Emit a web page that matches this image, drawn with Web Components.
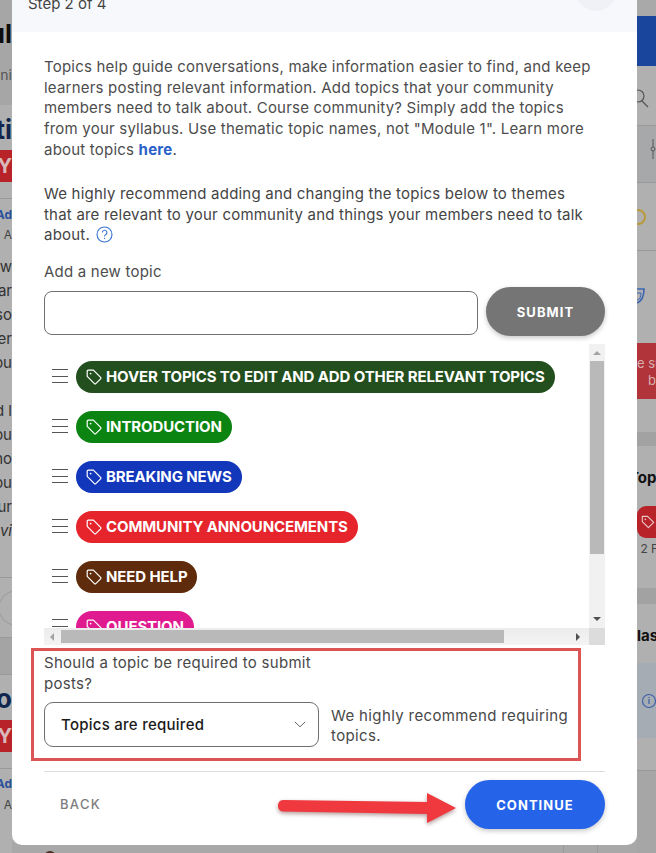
<!DOCTYPE html>
<html>
<head>
<meta charset="utf-8">
<title>Step 2 of 4</title>
<style>
  html, body { margin: 0; height: 853px; overflow: hidden; }
  body { font-family: Inter, "Liberation Sans", sans-serif; background: #a8a8a8; }
</style>
</head>
<body>
<page-shell>
  <side-strip slot="left" side="left"></side-strip>
  <wizard-modal slot="modal"></wizard-modal>
  <side-strip slot="right" side="right"></side-strip>
</page-shell>

<script>
// dimmed page behind the modal, only the slivers beside it show
const LEFT_ROWS = [
  [22, "", "#a6a6a6"],
  [24, "ul", "#a6a6a6", "font:700 26px Inter;color:#0d0d0d"],
  [20, "", "#a6a6a6"],
  [18, "ni", "#a6a6a6", "font:14px Inter;color:#555"],
  [21, "", "#a6a6a6"],
  [13, "", "#b0b0b0"],
  [24, "ti", "#b0b0b0", "font:700 26px Inter;color:#10264f"],
  [8, "", "#b0b0b0"],
  [32, "Y", "#b8232a", "font:700 20px Inter;color:#d9b9b9"],
  [16, "", "#b0b0b0"],
  [1, "", "#999"],
  [8, "", "#b0b0b0"],
  [16, "Ad", "#b0b0b0", "font:700 12px Inter;color:#2a4f9c"],
  [4, "", "#b0b0b0"],
  [16, "A", "#b0b0b0", "font:12px Inter;color:#444"],
  [12, "", "#b0b0b0"],
  [24, "w", "#b0b0b0", "font:15px Inter;color:#333"],
  [24, "ar", "#b0b0b0", "font:15px Inter;color:#333"],
  [24, "so", "#b0b0b0", "font:15px Inter;color:#333"],
  [24, "er", "#b0b0b0", "font:15px Inter;color:#333"],
  [24, "ou", "#b0b0b0", "font:15px Inter;color:#333"],
  [24, "", "#b0b0b0"],
  [24, "d l", "#b0b0b0", "font:15px Inter;color:#333"],
  [24, "ou", "#b0b0b0", "font:15px Inter;color:#333"],
  [24, "no", "#b0b0b0", "font:15px Inter;color:#333"],
  [24, "ou", "#b0b0b0", "font:15px Inter;color:#333"],
  [24, "ur", "#b0b0b0", "font:15px Inter;color:#333"],
  [24, "vi", "#b0b0b0", "font:italic 15px Inter;color:#333"],
  [34, "", "#b0b0b0"],
  [1, "", "#999"],
  [59, "", "#b0b0b0", "", "circle"],
  [1, "", "#999"],
  [36, "", "#a4a4a4"],
  [1, "", "#999"],
  [12, "", "#b0b0b0"],
  [24, "o", "#b0b0b0", "font:700 26px Inter;color:#10264f"],
  [9, "", "#b0b0b0"],
  [32, "Y", "#b8232a", "font:700 20px Inter;color:#d9b9b9"],
  [16, "", "#b0b0b0"],
  [1, "", "#999"],
  [7, "", "#b0b0b0"],
  [16, "Ad", "#b0b0b0", "font:700 12px Inter;color:#2a4f9c"],
  [5, "", "#b0b0b0"],
  [16, "A", "#b0b0b0", "font:12px Inter;color:#444"],
  [40, "", "#b0b0b0"]
];

const RIGHT_ROWS = [
  [16, "", "#a9a9a9"],
  [50, "", "#1a459c"],
  [59, "", "#b0b0b0", "", "search"],
  [1, "", "#999"],
  [56, "", "#a6a8aa", "", "slider"],
  [1, "", "#999"],
  [67, "", "#b0b0b0", "", "smile"],
  [1, "", "#999"],
  [92, "", "#b0b0b0", "", "shield"],
  [12, "", "#b0343a"],
  [17, "e su", "#b0343a", "font:13px Inter;color:#d8b0b0"],
  [17, "&nbsp;&nbsp;&nbsp;b", "#b0343a", "font:13px Inter;color:#d8b0b0"],
  [10, "", "#b0343a"],
  [33, "", "#b0b0b0"],
  [14, "", "#a2a2a2"],
  [22, "", "#b0b0b0"],
  [20, "Top", "#b0b0b0", "font:700 15px Inter;color:#111;text-indent:-8px"],
  [18, "", "#b0b0b0"],
  [32, "", "#b0b0b0", "", "tag"],
  [4, "", "#b0b0b0"],
  [14, "&nbsp;2 F", "#b0b0b0", "font:12px Inter;color:#444"],
  [32, "", "#b0b0b0"],
  [16, "", "#a2a2a2"],
  [22, "", "#b0b0b0"],
  [20, "las", "#b0b0b0", "font:700 15px Inter;color:#111"],
  [17, "", "#b0b0b0"],
  [75, "", "#a6acb4", "", "info"],
  [32, "", "#b0b0b0"],
  [1, "", "#999"],
  [84, "", "#a6a6a6"]
];

const STRIP_ICONS = {
  circle: `<svg width="12" height="59" style="display:block"><circle cx="16" cy="30" r="17" fill="none" stroke="#9a9a9a"/></svg>`,
  search: `<svg width="19" height="59" style="display:block"><circle cx="1" cy="30" r="6" fill="none" stroke="#555" stroke-width="1.2"/><path d="M5 35l6 6" stroke="#555" stroke-width="1.2"/></svg>`,
  slider: `<svg width="19" height="56" style="display:block"><path d="M16 13v20" stroke="#555"/><circle cx="16" cy="23" r="2" fill="#a6a8aa" stroke="#555"/></svg>`,
  smile: `<svg width="19" height="67" style="display:block"><circle cx="1" cy="34" r="7" fill="none" stroke="#b99a38" stroke-width="2"/></svg>`,
  shield: `<svg width="19" height="92" style="display:block"><path d="M-6 38h13c0 8-2 12-7 14" fill="none" stroke="#3a66b0" stroke-width="1.6"/><path d="M-2 42h6c0 4-1 6-4 7" fill="none" stroke="#3a66b0"/></svg>`,
  tag: `<div style="width:19px;height:32px;background:#b8232a;border-radius:9px 0 0 9px;display:flex;align-items:center;padding-left:4px;box-sizing:border-box"><svg width="14" height="14" viewBox="0 0 16 16"><path d="M1.5 1.5h6l7 7-6 6-7-7z" fill="none" stroke="#e8c8c8" stroke-width="1.3" stroke-linejoin="round"/><circle cx="5" cy="5" r=".9" fill="#e8c8c8"/></svg></div>`,
  info: `<svg width="19" height="75" style="display:block"><circle cx="12" cy="38" r="6.5" fill="none" stroke="#3a5ea8" stroke-width="1.1"/><path d="M12 36v5M12 34v1" stroke="#3a5ea8" stroke-width="1.2"/></svg>`
};

class SideStrip extends HTMLElement {
  connectedCallback() {
    const shadow = this.attachShadow({ mode: "open" });
    const left = this.getAttribute("side") === "left";
    const rows = left ? LEFT_ROWS : RIGHT_ROWS;
    const html = rows.map(([h, text, bg, css, icon]) => {
      const inner = icon ? STRIP_ICONS[icon] : text;
      // line-height goes after css, the font shorthand would reset it
      return `<div class="row" style="height:${h}px;background:${bg};${css || ""};line-height:${h}px">${inner}</div>`;
    }).join("");
    shadow.innerHTML = `
      <style>
        :host { display: block; overflow: hidden; height: 853px; }
        .row { overflow: hidden; white-space: nowrap; }
        .left .row { text-align: right; direction: rtl; }
      </style>
      <div class="${left ? "left" : "right"}">${html}</div>`;
  }
}

class PageShell extends HTMLElement {
  connectedCallback() {
    const shadow = this.attachShadow({ mode: "open" });
    shadow.innerHTML = `
      <style>
        :host { display: grid; grid-template-columns: 12px 625px 19px; height: 853px; position: relative; }
        svg { position: absolute; left: 0; top: 845px; }
      </style>
      <slot name="left"></slot>
      <slot name="modal"></slot>
      <slot name="right"></slot>
      <svg width="656" height="8"><path d="M563.5 0v8M597.5 0v8" stroke="#9a9a9a"/><circle cx="50" cy="12" r="6" fill="#4a2a20"/></svg>`;
  }
}

class TopicTag extends HTMLElement {
  connectedCallback() {
    const shadow = this.attachShadow({ mode: "open" });
    shadow.innerHTML = `
      <style>
        :host { display: flex; align-items: center; height: 32px; flex: none; }
        .burger { width: 16px; height: 12px; margin: 0 8px; flex: none;
          border-top: 1px solid #555; border-bottom: 1px solid #555; position: relative; top: -1px; box-sizing: content-box; }
        .burger::after { content: ""; display: block; height: 1px; background: #555; margin-top: 5.5px; }
        .pill { display: flex; align-items: center; height: 32px; padding: 0 10px; gap: 4px;
          border-radius: 16px; white-space: nowrap; color: #fff;
          font: 700 15px/32px Inter, "Liberation Sans", sans-serif; letter-spacing: -0.12px;
          background: ${this.getAttribute("color")}; }
        svg { flex: none; }
      </style>
      <span class="burger"></span>
      <span class="pill">
        <svg width="16" height="16" viewBox="0 0 16 16"><path d="M1.2 2.2a1 1 0 0 1 1-1h5.2l7.2 7.2a1 1 0 0 1 0 1.4l-4.8 4.8a1 1 0 0 1-1.4 0L1.2 7.4z" fill="none" stroke="#fff" stroke-width="1.2" stroke-linejoin="round"/><circle cx="4.6" cy="4.6" r=".9" fill="#fff"/></svg>
        <slot></slot>
      </span>`;
  }
}

class ScrollBox extends HTMLElement {
  connectedCallback() {
    const shadow = this.attachShadow({ mode: "open" });
    shadow.innerHTML = `
      <style>
        :host { display: grid; grid-template-columns: 545px 16px; grid-template-rows: 284px 17px; height: 301px; }
        .list { overflow: hidden; padding: 17px 0 0 0; box-sizing: border-box;
          display: flex; flex-direction: column; gap: 18px; }
        .vbar { background: #f1f1f1; display: flex; flex-direction: column; align-items: center; padding: 0 1px; }
        .hbar { background: linear-gradient(#ececec, #f4f4f4); display: flex; align-items: center; }
        .corner { background: #dcdcdc; }
        .up, .down { width: 0; height: 0; border: 4px solid transparent; flex: none; }
        .up { border-bottom: 4px solid #a3a3a3; border-top-width: 0; margin-top: 7px; margin-bottom: 6px; }
        .down { border-top: 4px solid #505050; border-bottom-width: 0; margin-top: 63px; }
        .vthumb { width: 14px; height: 193px; background: #b9b9b9; flex: none; }
        .left, .right { width: 0; height: 0; border: 4px solid transparent; flex: none; }
        .left { border-right: 4px solid #a3a3a3; border-left-width: 0; margin: 0 7px 0 6px; }
        .right { border-left: 4px solid #505050; border-right-width: 0; margin-left: 72px; }
        .hthumb { width: 443px; height: 13px; background: #b9b9b9; flex: none; }
      </style>
      <div class="list"><slot></slot></div>
      <div class="vbar"><span class="up"></span><span class="vthumb"></span><span class="down"></span></div>
      <div class="hbar"><span class="left"></span><span class="hthumb"></span><span class="right"></span></div>
      <div class="corner"></div>`;
  }
}

class PillButton extends HTMLElement {
  connectedCallback() {
    const shadow = this.attachShadow({ mode: "open" });
    shadow.innerHTML = `
      <style>
        :host { display: flex; align-items: center; justify-content: center; flex: none;
          height: 49px; border-radius: 25px; color: #fff; box-sizing: border-box;
          font: 700 13px Inter, "Liberation Sans", sans-serif; letter-spacing: 1.05px;
          box-shadow: 0 2px 5px rgba(0,0,0,.22); }
      </style>
      <slot></slot>`;
  }
}

class SelectBox extends HTMLElement {
  connectedCallback() {
    const shadow = this.attachShadow({ mode: "open" });
    shadow.innerHTML = `
      <style>
        :host { display: flex; align-items: center; justify-content: space-between; flex: none;
          width: 275px; height: 45px; box-sizing: border-box; padding: 0 12px 0 16px;
          border: 1px solid #6f6f6f; border-radius: 9px; color: #1a1a1a;
          font: 500 15px Inter, "Liberation Sans", sans-serif; letter-spacing: .26px; }
      </style>
      <slot></slot>
      <svg width="12" height="7" viewBox="0 0 12 7"><path d="M.8.8L6 5.8 11.2.8" fill="none" stroke="#666" stroke-width="1"/></svg>`;
  }
}

class WizardModal extends HTMLElement {
  connectedCallback() {
    const shadow = this.attachShadow({ mode: "open" });
    shadow.innerHTML = `
      <style>
        :host { display: flex; flex-direction: column; position: relative; height: 845px; background: #fff;
          border-radius: 0 0 10px 10px; overflow: hidden; color: #4d4d4d;
          font: 15px/20.7px Inter, "Liberation Sans", sans-serif; }
        header { height: 32px; flex: none; background: #f7f8fb; position: relative; overflow: hidden; color: #444; }
        header span { position: absolute; left: 16px; top: -6px; }
        header i { position: absolute; left: 563px; top: -31px; width: 42px; height: 42px; border-radius: 50%; background: #eff1f7; }
        main { padding: 25px 32px 0; display: flex; flex-direction: column; flex: 1; letter-spacing: .21px; }
        p { margin: 0; max-width: 550px; }
        p.b { margin-top: 23.5px; color: #444; }
        a { color: #2b62c9; font-weight: 700; text-decoration: none; }
        .help { vertical-align: -3px; margin-left: 2px; }
        label { display: block; margin-top: 15.5px; }
        .add { display: flex; gap: 8px; margin-top: 5px; align-items: flex-start; height: 49px; }
        .input { width: 434px; height: 44px; margin-top: 4px; box-sizing: border-box; border: 1px solid #707070; border-radius: 8px; }
        scroll-box { margin-top: 8px; }
        .mark { margin: 3px 24px 0 -13px; border: 3px solid #dc5555; height: 113px; box-sizing: border-box;
          padding: 2px 0 0 10px; }
        .mark .q { width: 300px; color: #484848; letter-spacing: .29px; }
        .row { display: flex; align-items: center; gap: 12px; margin-top: 7px; }
        .row p { color: #484848; width: 240px; letter-spacing: .37px; margin-top: 4px; }
        footer { margin-top: 10px; border-top: 1px solid #ddd; height: 58px; display: flex;
          align-items: center; justify-content: space-between; padding-left: 16px; padding-top: 8px; box-sizing: border-box; }
        .back { font: 500 13px Inter, "Liberation Sans", sans-serif; letter-spacing: 1.3px; color: #7d7d7d; margin-top: -2px; }
        .arrow { position: absolute; left: 264px; top: 786px; filter: drop-shadow(0 2px 2px rgba(90,30,30,.45)); }
      </style>
      <header><span>Step 2 of 4</span><i></i></header>
      <main>
        <p>Topics help guide conversations, make information easier to find, and keep learners posting relevant information. Add topics that your community members need to talk about. Course community? Simply add the topics from your syllabus. Use thematic topic names, not "Module 1". Learn more about topics <a>here</a>.</p>
        <p class="b">We highly recommend adding and changing the topics below to themes that are relevant to your community and things your members need to talk about.
          <svg class="help" width="17" height="17" viewBox="0 0 17 17"><circle cx="8.5" cy="8.5" r="7.5" fill="none" stroke="#3a74d0" stroke-width="1.1"/><path d="M6.3 6.6a2.3 2.3 0 1 1 3.4 2c-.8.5-1.2.9-1.2 1.9" fill="none" stroke="#3a74d0" stroke-width="1.1"/><circle cx="8.5" cy="12.4" r=".7" fill="#3a74d0"/></svg>
        </p>
        <label>Add a new topic</label>
        <div class="add">
          <div class="input"></div>
          <pill-button style="width:119px;background:#757575">SUBMIT</pill-button>
        </div>
        <scroll-box>
          <topic-tag color="#234f1e">HOVER TOPICS TO EDIT AND ADD OTHER RELEVANT TOPICS</topic-tag>
          <topic-tag color="#0b8412">INTRODUCTION</topic-tag>
          <topic-tag color="#1237bb">BREAKING NEWS</topic-tag>
          <topic-tag color="#e5242c">COMMUNITY ANNOUNCEMENTS</topic-tag>
          <topic-tag color="#5e2b0c">NEED HELP</topic-tag>
          <topic-tag color="#e01a8f">QUESTION</topic-tag>
        </scroll-box>
        <div class="mark">
          <p class="q">Should a topic be required to submit posts?</p>
          <div class="row">
            <select-box>Topics are required</select-box>
            <p>We highly recommend requiring topics.</p>
          </div>
        </div>
        <footer>
          <span class="back">BACK</span>
          <pill-button style="width:140px;background:#2563e8">CONTINUE</pill-button>
        </footer>
      </main>
      <svg class="arrow" width="182" height="42" viewBox="0 0 182 42"><path d="M7 14L151 16V7l29 15-29 15V28L7 25.5a5.8 5.8 0 0 1 0-11.5z" fill="#f0393f"/></svg>`;
  }
}

customElements.define("side-strip", SideStrip);
customElements.define("page-shell", PageShell);
customElements.define("topic-tag", TopicTag);
customElements.define("scroll-box", ScrollBox);
customElements.define("pill-button", PillButton);
customElements.define("select-box", SelectBox);
customElements.define("wizard-modal", WizardModal);
</script>
</body>
</html>
